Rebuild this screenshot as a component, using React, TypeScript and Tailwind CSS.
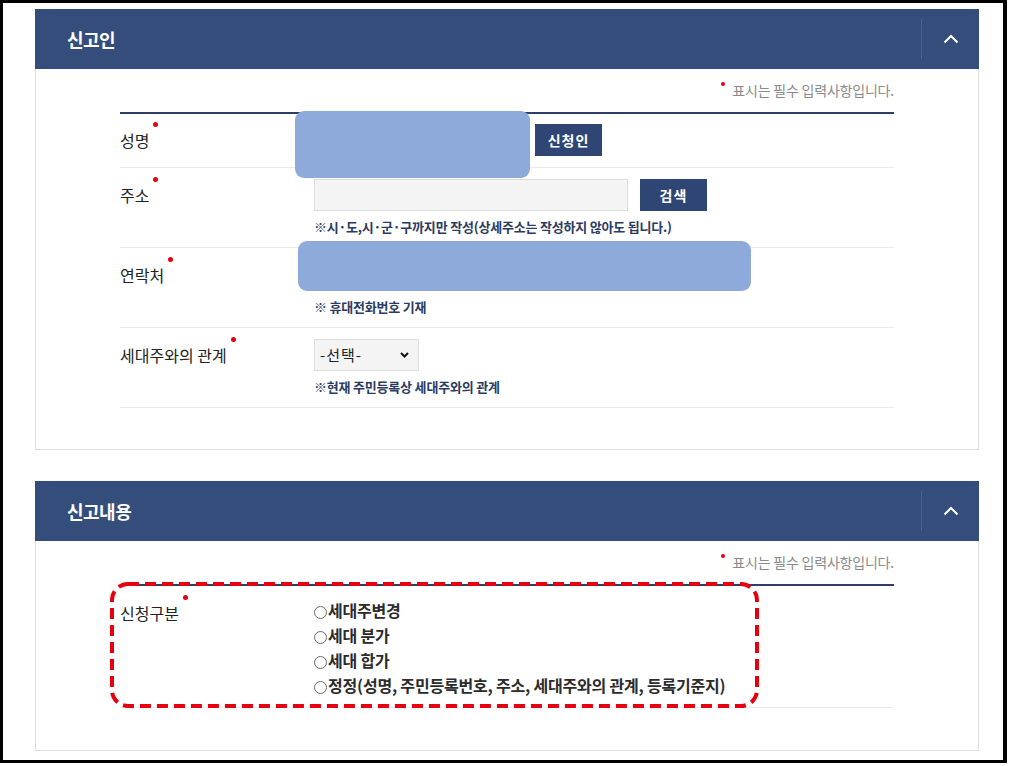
import React from "react";

const Dot = () => (
  <span className="absolute -right-[9px] -top-[8px] w-[5px] h-[5px] rounded-full bg-[#e3000f]" />
);

function Label({ text }: { text: string }) {
  return (
    <div className="w-[194px] shrink-0 h-8 flex items-center">
      <span className="relative text-[16px] leading-[20px] text-[#222]">
        {text}
        <Dot />
      </span>
    </div>
  );
}

function Header({ title }: { title: string }) {
  return (
    <div className="h-[60px] bg-[#354d7b] flex items-center">
      <h2 className="flex-1 pl-[32px] text-white text-[18px] font-bold tracking-[-0.5px]">{title}</h2>
      <div className="w-[58px] h-[40px] border-l border-[#4b6190] flex items-center justify-center">
        <svg width="16" height="10" viewBox="0 0 16 10">
          <polyline points="1.5,8.5 8,2 14.5,8.5" fill="none" stroke="#fff" strokeWidth="2" />
        </svg>
      </div>
    </div>
  );
}

function RequiredNote() {
  return (
    <div className="h-[20px] flex items-start justify-end">
      <span className="w-[4px] h-[4px] rounded-full bg-[#e3000f] mt-[2px] mr-[7px]" />
      <span className="text-[14px] leading-[20px] text-[#8a8a8a] tracking-[-0.2px]">표시는 필수 입력사항입니다.</span>
    </div>
  );
}

const Note = ({ children }: { children: React.ReactNode }) => (
  <p className="mt-[7px] text-[13px] leading-[18px] font-bold text-[#2a3b62] tracking-[-0.2px]">{children}</p>
);

const Btn = ({ children }: { children: React.ReactNode }) => (
  <button className="w-[67px] h-8 bg-[#2f4674] text-white text-[14px] font-bold tracking-[1px]">{children}</button>
);

export default function App() {
  return (
    <div className="w-[1012px] h-[766px] bg-white font-['Noto_Sans_CJK_KR',sans-serif]">
      <div className="w-[1007px] h-[763px] border-[3px] border-r-4 border-black pl-[32px] pt-[6px]">
        <div className="w-[944px]">
          {/* Panel 1 */}
          <section>
            <Header title="신고인" />
            <div className="border border-t-0 border-[#dcdcdc] px-[84px] pt-[11px] pb-[41px]">
              <RequiredNote />
              <div className="relative mt-[12px] border-t-2 border-[#2c3f68]">
                <div className="flex border-b border-[#ebebeb] pt-[10px] pb-[11px]">
                  <Label text="성명" />
                  <div className="flex gap-[10px]">
                    <div className="w-[211px] h-8 bg-[#f4f4f4] border border-[#dddddd]" />
                    <Btn>신청인</Btn>
                  </div>
                </div>
                <div className="flex border-b border-[#ebebeb] pt-[11px] pb-[11px]">
                  <Label text="주소" />
                  <div>
                    <div className="flex gap-[12px]">
                      <div className="w-[314px] h-8 bg-[#f4f4f4] border border-[#dddddd]" />
                      <Btn>검색</Btn>
                    </div>
                    <Note>※시·도,시·군·구까지만 작성(상세주소는 작성하지 않아도 됩니다.)</Note>
                  </div>
                </div>
                <div className="flex border-b border-[#ebebeb] pt-[11px] pb-[11px]">
                  <Label text="연락처" />
                  <div>
                    <div className="w-[420px] h-8 bg-[#f4f4f4] border border-[#dddddd]" />
                    <Note>※ 휴대전화번호 기재</Note>
                  </div>
                </div>
                <div className="flex border-b border-[#ebebeb] pt-[11px] pb-[11px]">
                  <Label text="세대주와의 관계" />
                  <div>
                    <div className="relative w-[105px] h-8">
                      <select className="appearance-none w-full h-full bg-[#f4f4f4] border border-[#dddddd] pl-[5px] text-[15px] tracking-[1px] text-[#222] outline-none">
                        <option>-선택-</option>
                      </select>
                      <svg className="absolute right-[10px] top-[13px] pointer-events-none" width="9" height="6" viewBox="0 0 9 6">
                        <polyline points="1,1 4.5,4.5 8,1" fill="none" stroke="#111" strokeWidth="2" />
                      </svg>
                    </div>
                    <Note>※현재 주민등록상 세대주와의 관계</Note>
                  </div>
                </div>
                <div className="absolute left-[175px] -top-[3px] w-[235px] h-[67px] rounded-[9px] bg-[#8eaadb]" />
                <div className="absolute left-[178px] top-[127px] w-[453px] h-[50px] rounded-[9px] bg-[#8eaadb]" />
              </div>
            </div>
          </section>

          {/* Panel 2 */}
          <section className="mt-[31px]">
            <Header title="신고내용" />
            <div className="border border-t-0 border-[#dcdcdc] px-[84px] pt-[11px] pb-[42px]">
              <RequiredNote />
              <div className="relative mt-[12px] border-t-2 border-[#2c3f68]">
                <div className="flex border-b border-[#ebebeb] pt-[11px] pb-[10px]">
                  <Label text="신청구분" />
                  <div className="flex flex-col">
                    {[
                      "세대주변경",
                      "세대 분가",
                      "세대 합가",
                      "정정(성명, 주민등록번호, 주소, 세대주와의 관계, 등록기준지)",
                    ].map((t) => (
                      <label key={t} className="h-[25px] flex items-center text-[16px] font-semibold text-[#2b2b2b] tracking-[-0.2px]">
                        <span className="w-[13px] h-[13px] rounded-full border border-[#6b6b6b] translate-y-[3px] mr-[1px] shrink-0" />
                        {t}
                      </label>
                    ))}
                  </div>
                </div>
                <svg className="absolute -left-[10px] -top-[4px] pointer-events-none" width="650" height="126" viewBox="0 0 650 126">
                  <rect x="2" y="2" width="645" height="122" rx="16" fill="none" stroke="#e6000f" strokeWidth="4" strokeDasharray="11 6" />
                </svg>
              </div>
            </div>
          </section>
        </div>
      </div>
    </div>
  );
}
